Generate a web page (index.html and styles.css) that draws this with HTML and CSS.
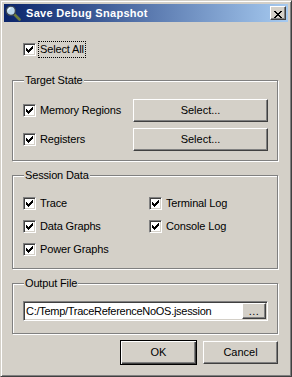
FILE: index.html
```html
<!DOCTYPE html>
<html>
    <head>
        <meta charset="utf-8" />
        <title>Save Debug Snapshot</title>
        <link rel="stylesheet" href="styles.css">
    </head>

    <body>
        <svg width="0" height="0" class="defs">
            <symbol id="tick" viewBox="0 0 7 7">
                <path d="M0 2L0 5L1 5L1 6L2 6L2 7L3 7L3 6L4 6L4 5L5 5L5 4L6 4L6 3L7 3L7 0L6 0L6 1L5 1L5 2L4 2L4 3L3 3L3 4L2 4L2 3L1 3L1 2Z" fill="#000" />
            </symbol>
        </svg>

        <div class="window">
            <div class="titlebar">
                <svg class="app-icon" viewBox="0 0 16 16">
                    <line x1="8.5" y1="8.5" x2="14.5" y2="14.5" stroke="#6f7d3c" stroke-width="2.6" stroke-linecap="round" />
                    <circle cx="5.8" cy="5.8" r="4.6" fill="#bcd8ec" stroke="#3c4450" stroke-width="1.3" />
                    <path d="M3.2 5.4a2.6 2.6 0 0 1 2.4-2.3" stroke="#fff" stroke-width="1" fill="none" />
                </svg>
                <span class="title">Save Debug Snapshot</span>
                <button class="close">
                    <svg viewBox="0 0 8 7">
                        <path d="M0 0h2v1H0zM6 0h2v1H6zM1 1h2v1H1zM5 1h2v1H5zM2 2h4v1H2zM3 3h2v1H3zM2 4h4v1H2zM1 5h2v1H1zM5 5h2v1H5zM0 6h2v1H0zM6 6h2v1H6z" fill="#000" />
                    </svg>
                </button>
            </div>

            <div class="content">
                <label class="check select-all">
                    <span class="box"><svg><use href="#tick" /></svg></span>
                    <span class="text focus">Select All</span>
                </label>

                <fieldset class="group target">
                    <legend>Target State</legend>
                    <div class="row">
                        <label class="check">
                            <span class="box"><svg><use href="#tick" /></svg></span>
                            <span class="text">Memory Regions</span>
                        </label>
                        <button class="btn select">Select...</button>
                    </div>
                    <div class="row">
                        <label class="check">
                            <span class="box"><svg><use href="#tick" /></svg></span>
                            <span class="text">Registers</span>
                        </label>
                        <button class="btn select">Select...</button>
                    </div>
                </fieldset>

                <fieldset class="group session">
                    <legend>Session Data</legend>
                    <div class="checks">
                        <label class="check">
                            <span class="box"><svg><use href="#tick" /></svg></span>
                            <span class="text">Trace</span>
                        </label>
                        <label class="check">
                            <span class="box"><svg><use href="#tick" /></svg></span>
                            <span class="text">Terminal Log</span>
                        </label>
                        <label class="check">
                            <span class="box"><svg><use href="#tick" /></svg></span>
                            <span class="text">Data Graphs</span>
                        </label>
                        <label class="check">
                            <span class="box"><svg><use href="#tick" /></svg></span>
                            <span class="text">Console Log</span>
                        </label>
                        <label class="check">
                            <span class="box"><svg><use href="#tick" /></svg></span>
                            <span class="text">Power Graphs</span>
                        </label>
                    </div>
                </fieldset>

                <fieldset class="group output">
                    <legend>Output File</legend>
                    <div class="field">
                        <span class="path">C:/Temp/TraceReferenceNoOS.jsession</span>
                        <button class="btn browse">...</button>
                    </div>
                </fieldset>

                <div class="actions">
                    <button class="btn default">OK</button>
                    <button class="btn">Cancel</button>
                </div>
            </div>
        </div>
    </body>
</html>
```

FILE: styles.css
```css
* {
    margin: 0;
    padding: 0;
    box-sizing: border-box;
}
body {
    background: #d4d0c8;
    color: #000;
    font: 11px/13px "Liberation Sans", Arial, sans-serif;
    letter-spacing: -0.15px;
}
.defs {
    position: absolute;
}
svg {
    display: block;
    shape-rendering: crispEdges;
}

/* window frame */
.window {
    width: 292px;
    height: 377px;
    padding: 3px;
    background: #d4d0c8;
    border: 1px solid;
    border-color: #d4d0c8 #404040 #404040 #d4d0c8;
    box-shadow: inset 1px 1px #fff, inset -1px -1px #808080;
}
.titlebar {
    display: flex;
    align-items: center;
    height: 18px;
    padding: 0 2px 0 1px;
    background: linear-gradient(to right, #0a246a, #a6caf0);
    color: #fff;
}
.app-icon {
    width: 16px;
    height: 16px;
    shape-rendering: auto;
}
.title {
    flex: 1;
    margin-left: 5px;
    font-weight: bold;
    letter-spacing: 0.3px;
}
button {
    font: inherit;
    color: #000;
    background: #d4d0c8;
}
.close {
    width: 16px;
    height: 14px;
    padding: 2px 3px 0 3px;
    border: 1px solid;
    border-color: #fff #404040 #404040 #fff;
    box-shadow: inset -1px -1px #808080;
}
.close svg {
    width: 8px;
    height: 7px;
}

/* content */
.content {
    padding: 19px 10px 0 8px;
}
.check {
    display: flex;
    align-items: center;
    height: 17px;
}
.box {
    width: 13px;
    height: 13px;
    padding: 2px;
    background: #fff;
    border: 1px solid;
    border-color: #808080 #fff #fff #808080;
    box-shadow: inset 1px 1px #404040, inset -1px -1px #d4d0c8;
}
.box svg {
    width: 7px;
    height: 7px;
}
.check .text {
    margin-left: 2px;
    padding: 1px;
    border: 1px dotted transparent;
}
.check .focus {
    border-color: #000;
}
.select-all {
    margin-left: 11px;
}

/* group boxes */
.group {
    margin-top: 8px;
    padding: 12px 9px 9px 10px;
    border: 1px solid #808080;
    box-shadow: inset 1px 1px #fff, 1px 1px #fff;
    min-width: 0;
}
.target {
    margin-top: 16px;
}
.group legend {
    margin-left: 1px;
    padding: 0 1px;
    background: #d4d0c8;
}
.row {
    display: flex;
    align-items: center;
    justify-content: space-between;
}
.row + .row {
    margin-top: 6px;
}
.session {
    padding-top: 13px;
    padding-bottom: 10px;
}
.checks {
    display: grid;
    grid-template-columns: 126px auto;
    row-gap: 6px;
}
.output {
    padding-top: 11px;
    padding-bottom: 12px;
}

/* buttons */
.btn {
    height: 23px;
    border: 1px solid;
    border-color: #fff #404040 #404040 #fff;
    box-shadow: inset -1px -1px #808080;
}
.select {
    width: 135px;
}
.field {
    display: flex;
    align-items: center;
    height: 20px;
    padding: 1px;
    background: #fff;
    border: 1px solid;
    border-color: #808080 #fff #fff #808080;
    box-shadow: inset 1px 1px #404040, inset -1px -1px #d4d0c8;
}
.path {
    flex: 1;
    padding-left: 1px;
    letter-spacing: -0.28px;
}
.browse {
    width: 24px;
    height: 16px;
    line-height: 10px;
    letter-spacing: 0.5px;
}
.actions {
    display: flex;
    align-items: center;
    justify-content: flex-end;
    gap: 6px;
    margin-top: 6px;
}
.actions .btn {
    width: 75px;
}
.actions .default {
    width: 77px;
    height: 25px;
    border-color: #000;
    box-shadow: inset 1px 1px #fff, inset -1px -1px #404040, inset -2px -2px #808080;
}
```
